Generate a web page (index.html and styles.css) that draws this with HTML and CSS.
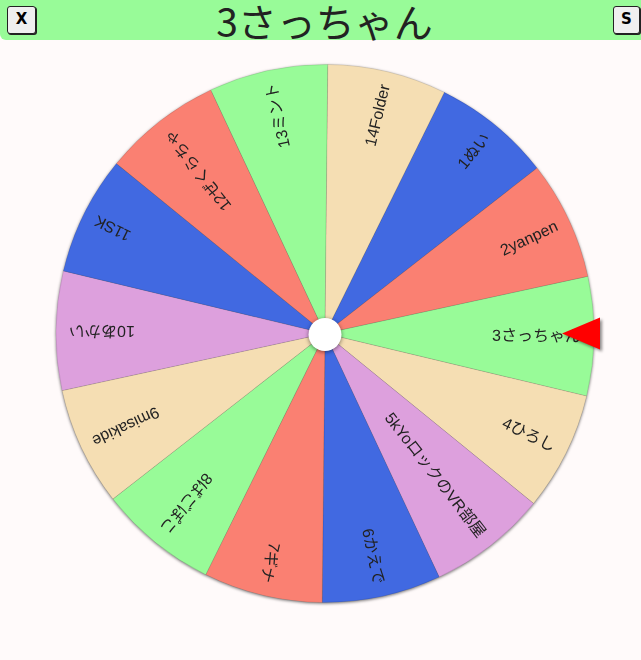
FILE: index.html
```html
<!DOCTYPE html>
<html lang="ja">
<head>
<meta charset="utf-8">
<title>ルーレット</title>
<link rel="stylesheet" href="styles.css">
</head>
<body>
<header class="topbar">
  <button class="btn">X</button>
  <h1 class="title">3さっちゃん</h1>
  <button class="btn">S</button>
</header>
<main class="stage">
  <svg class="wheel" viewBox="0 40 641 620" width="641" height="620">
    <g class="disc">
      <g transform="rotate(-50.83 325 333.5)"><path class="seg blue" d="M325 333.5 L587.26 273.64 A269 269 0 0 1 587.26 393.36 Z"/><text class="lbl" x="581" y="333.5">1ぬい</text></g>
      <g transform="rotate(-25.11 325 333.5)"><path class="seg salmon" d="M325 333.5 L587.26 273.64 A269 269 0 0 1 587.26 393.36 Z"/><text class="lbl" x="581" y="333.5">2yanpen</text></g>
      <g transform="rotate(0.6 325 333.5)"><path class="seg green" d="M325 333.5 L587.26 273.64 A269 269 0 0 1 587.26 393.36 Z"/><text class="lbl" x="581" y="333.5">3さっちゃん</text></g>
      <g transform="rotate(26.31 325 333.5)"><path class="seg wheat" d="M325 333.5 L587.26 273.64 A269 269 0 0 1 587.26 393.36 Z"/><text class="lbl" x="581" y="333.5">4ひろし</text></g>
      <g transform="rotate(52.03 325 333.5)"><path class="seg plum" d="M325 333.5 L587.26 273.64 A269 269 0 0 1 587.26 393.36 Z"/><text class="lbl" x="581" y="333.5">5kYoロックのVR部屋</text></g>
      <g transform="rotate(77.74 325 333.5)"><path class="seg blue" d="M325 333.5 L587.26 273.64 A269 269 0 0 1 587.26 393.36 Z"/><text class="lbl" x="581" y="333.5">6かえで</text></g>
      <g transform="rotate(103.46 325 333.5)"><path class="seg salmon" d="M325 333.5 L587.26 273.64 A269 269 0 0 1 587.26 393.36 Z"/><text class="lbl" x="581" y="333.5">7ギナ</text></g>
      <g transform="rotate(129.17 325 333.5)"><path class="seg green" d="M325 333.5 L587.26 273.64 A269 269 0 0 1 587.26 393.36 Z"/><text class="lbl" x="581" y="333.5">8ばごぽこ</text></g>
      <g transform="rotate(154.89 325 333.5)"><path class="seg wheat" d="M325 333.5 L587.26 273.64 A269 269 0 0 1 587.26 393.36 Z"/><text class="lbl" x="581" y="333.5">9misakide</text></g>
      <g transform="rotate(180.6 325 333.5)"><path class="seg plum" d="M325 333.5 L587.26 273.64 A269 269 0 0 1 587.26 393.36 Z"/><text class="lbl" x="581" y="333.5">10あかい</text></g>
      <g transform="rotate(206.31 325 333.5)"><path class="seg blue" d="M325 333.5 L587.26 273.64 A269 269 0 0 1 587.26 393.36 Z"/><text class="lbl" x="581" y="333.5">11SK</text></g>
      <g transform="rotate(232.03 325 333.5)"><path class="seg salmon" d="M325 333.5 L587.26 273.64 A269 269 0 0 1 587.26 393.36 Z"/><text class="lbl" x="581" y="333.5">12ぜくらちゃ</text></g>
      <g transform="rotate(257.74 325 333.5)"><path class="seg green" d="M325 333.5 L587.26 273.64 A269 269 0 0 1 587.26 393.36 Z"/><text class="lbl" x="581" y="333.5">13ミント</text></g>
      <g transform="rotate(283.46 325 333.5)"><path class="seg wheat" d="M325 333.5 L587.26 273.64 A269 269 0 0 1 587.26 393.36 Z"/><text class="lbl" x="581" y="333.5">14Folder</text></g>
    </g>
    <circle class="hub" cx="325" cy="334.5" r="16.5"/>
    <polygon class="pointer" points="562,333.5 600,317.5 600,349.5"/>
  </svg>
</main>
</body>
</html>
```
FILE: styles.css
```css
html, body {
  margin: 0;
  padding: 0;
}
body {
  background: #fffafa;
  width: 641px;
  height: 660px;
  overflow: hidden;
  font-family: "Liberation Sans", "Noto Sans CJK JP", sans-serif;
}
.topbar {
  display: flex;
  align-items: center;
  height: 40px;
  padding: 0 1px 0 7px;
  background: #98fb98;
  border-radius: 0 0 0 6px;
  box-sizing: border-box;
}
.btn {
  width: 29px;
  height: 28px;
  padding: 0;
  margin-top: -1px;
  background: #efefef;
  border: 1px solid #222;
  border-radius: 3px;
  box-shadow: 1px 1px 0 #222;
  font-family: "DejaVu Sans", sans-serif;
  font-weight: bold;
  font-size: 15px;
  color: #000;
  line-height: 1;
}
.btn:last-child {
  width: 27px;
}
.title {
  flex: 1;
  margin: 0;
  text-align: center;
  font-family: "Noto Sans CJK JP", sans-serif;
  font-weight: normal;
  font-size: 39px;
  line-height: 1;
  color: #222;
}
.stage {
  display: block;
}
.wheel {
  display: block;
}
.disc {
  filter: drop-shadow(0 1px 1.5px rgba(0, 0, 0, 0.55));
}
.seg {
  stroke: rgba(0, 0, 0, 0.15);
  stroke-width: 0.6;
}
.blue { fill: #4169e1; }
.salmon { fill: #fa8072; }
.green { fill: #98fb98; }
.wheat { fill: #f5deb3; }
.plum { fill: #dda0dd; }
.lbl {
  font-family: "Liberation Sans", "Noto Sans CJK JP", sans-serif;
  font-size: 16px;
  fill: #222;
  text-anchor: end;
  dominant-baseline: central;
}
.hub {
  fill: #ffffff;
  filter: drop-shadow(0 1px 2px rgba(0, 0, 0, 0.5));
}
.pointer {
  fill: #ff0000;
  filter: drop-shadow(2px 2px 1.5px rgba(0, 0, 0, 0.45));
}
```
